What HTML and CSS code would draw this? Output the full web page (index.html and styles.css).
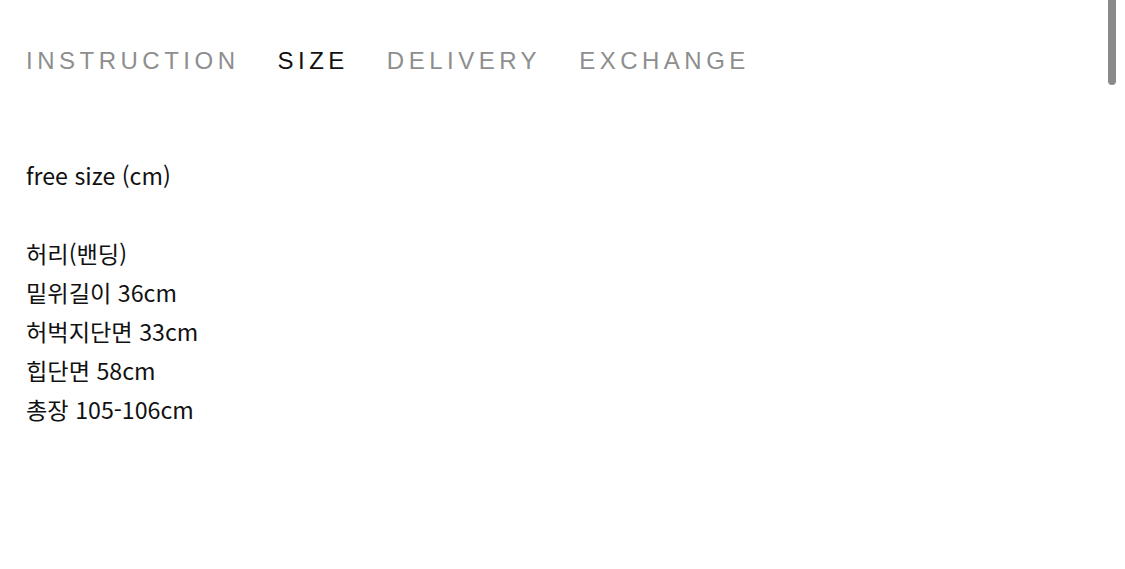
FILE: index.html
```html
<!DOCTYPE html>
<html lang="ko">
<head>
<meta charset="utf-8">
<link rel="stylesheet" href="styles.css">
</head>
<body>
<div class="page">
  <nav class="tabs">
    <span class="tab">INSTRUCTION</span>
    <span class="tab active">SIZE</span>
    <span class="tab">DELIVERY</span>
    <span class="tab">EXCHANGE</span>
  </nav>
  <div class="content">
    <p class="line">free size (cm)</p>
    <p class="line blank">&nbsp;</p>
    <p class="line">허리(밴딩)</p>
    <p class="line">밑위길이 36cm</p>
    <p class="line">허벅지단면 33cm</p>
    <p class="line">힙단면 58cm</p>
    <p class="line">총장 105-106cm</p>
  </div>
</div>
<div class="scrollbar"></div>
</body>
</html>
```

FILE: styles.css
```css
html, body {
  margin: 0;
  padding: 0;
  background: #ffffff;
  overflow: hidden;
}
.page {
  padding: 47px 26px 0 26px;
}
.tabs {
  display: flex;
  gap: 38px;
  font-family: "Liberation Sans", Arial, sans-serif;
  font-size: 24px;
  line-height: 28px;
  letter-spacing: 4.5px;
}
.tab {
  color: #8e8e8e;
}
.tab.active {
  color: #111111;
}
.content {
  margin-top: 81px;
  font-family: "Noto Sans CJK KR", "Noto Sans", sans-serif;
  font-size: 23.2px;
  line-height: 39px;
  color: #111111;
}
.line {
  margin: 0;
}
.scrollbar {
  position: absolute;
  top: 0;
  left: 1108px;
  width: 8px;
  height: 85px;
  background: #8a8a8a;
  border-radius: 0 0 4px 4px;
}
```
